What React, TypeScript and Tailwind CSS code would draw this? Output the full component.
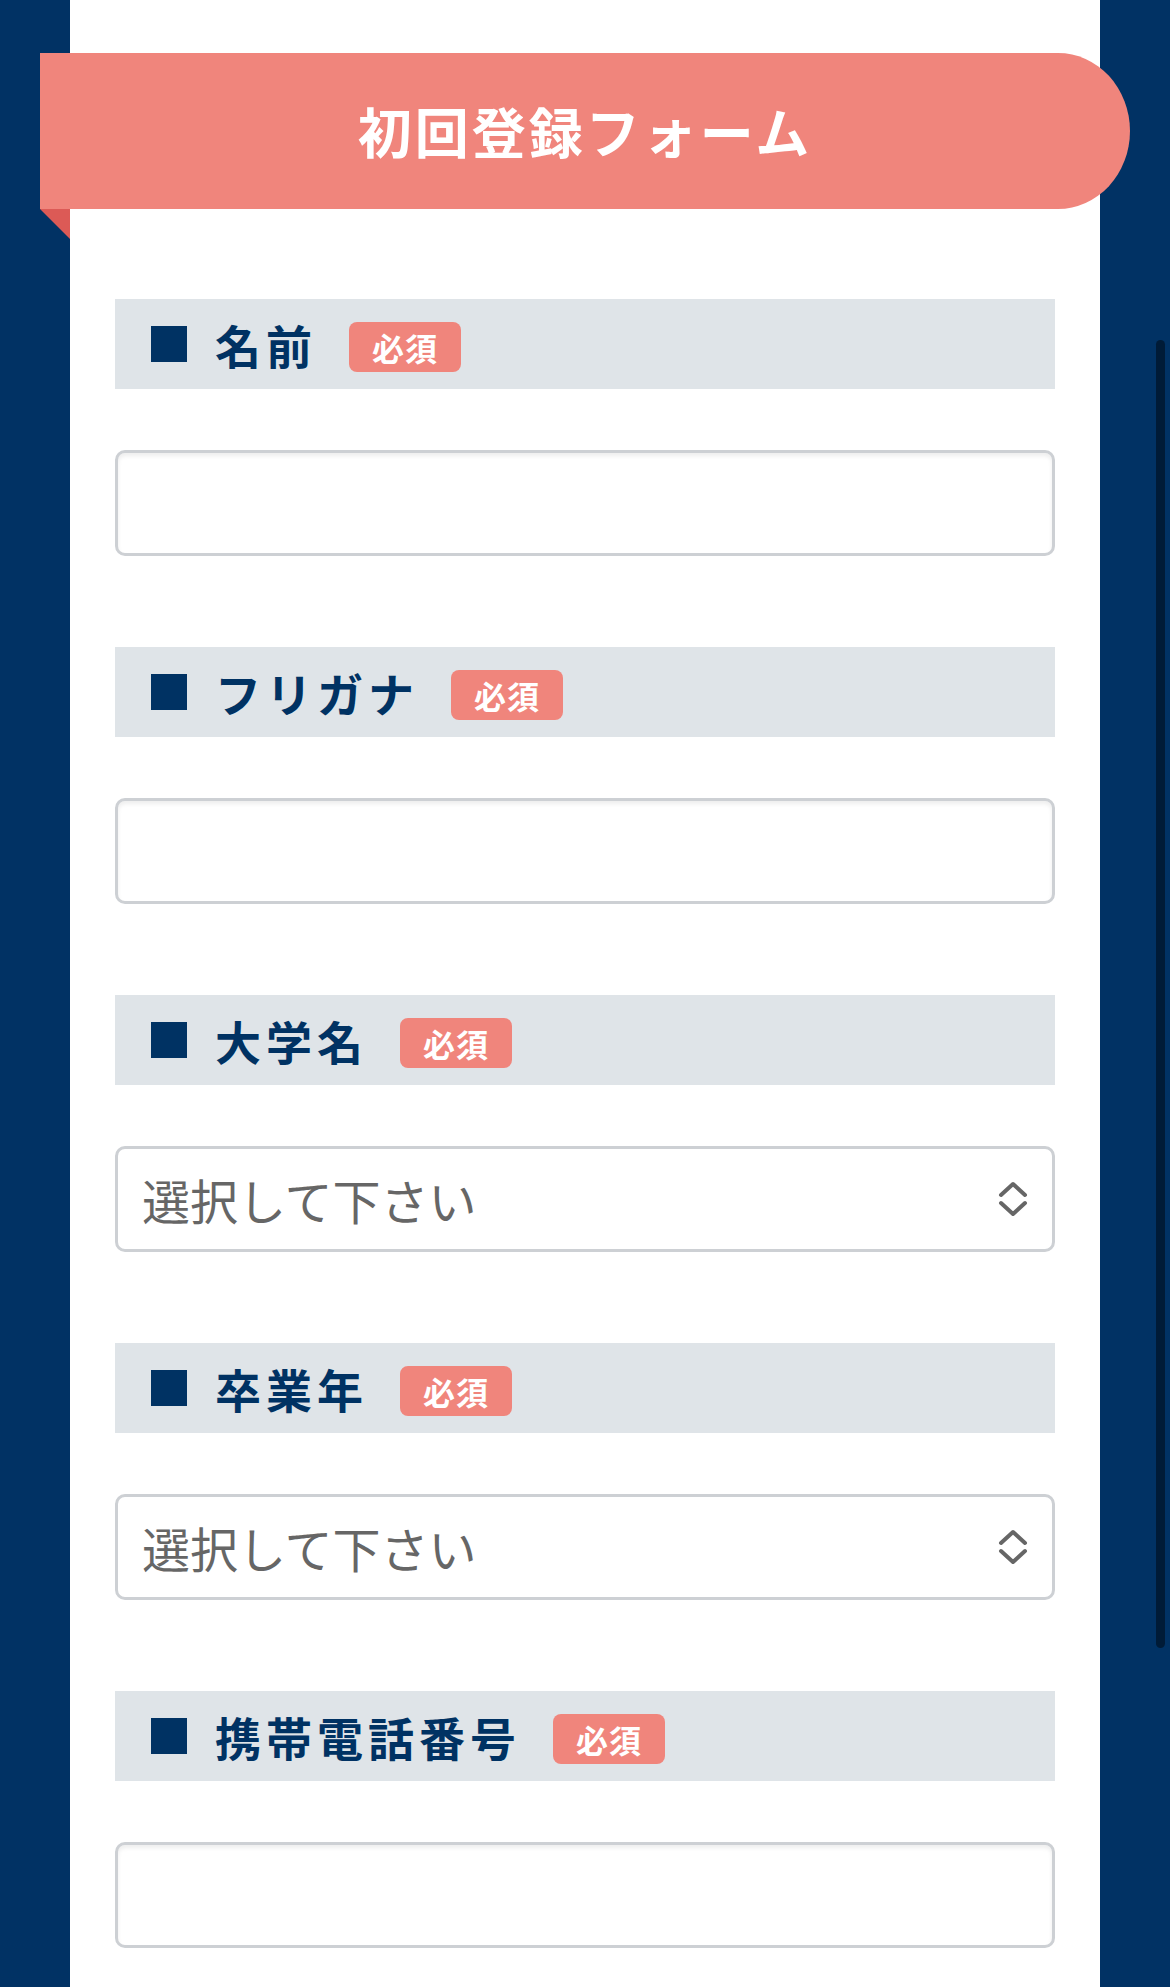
import React from 'react';

type Field = { label: string; kind: 'input' | 'select' };

const fields: Field[] = [
  { label: '名前', kind: 'input' },
  { label: 'フリガナ', kind: 'input' },
  { label: '大学名', kind: 'select' },
  { label: '卒業年', kind: 'select' },
  { label: '携帯電話番号', kind: 'input' },
];

const SelectArrows = () => (
  <svg width="30" height="36" viewBox="0 0 30 36" fill="none" stroke="#666666" strokeWidth="4" strokeLinecap="round" strokeLinejoin="round">
    <path d="M3 14 L15 3 L27 14" />
    <path d="M3 22 L15 33 L27 22" />
  </svg>
);

const FormField: React.FC<{ field: Field }> = ({ field }) => (
  <div className="flex flex-col">
    <div className="flex items-center h-[90px] bg-[#dfe4e8] pl-[36px]">
      <div className="w-[36px] h-[36px] bg-[#003263]" />
      <span className="ml-[28px] text-[46px] font-bold tracking-[5px] text-[#003263] leading-none">{field.label}</span>
      <span className="ml-[32px] mt-[5px] h-[50px] px-[23px] flex items-center rounded-[8px] bg-[#f0857c] text-white text-[32px] font-bold leading-none tracking-[1px]">
        必須
      </span>
    </div>
    {field.kind === 'input' ? (
      <input
        type="text"
        className="mt-[61px] h-[106px] w-full rounded-[10px] border-[3px] border-[#cdd0d4] bg-white px-[23px] text-[46px] shadow-[inset_0_3px_4px_rgba(0,0,0,0.07)] outline-none"
      />
    ) : (
      <div className="mt-[61px] h-[106px] w-full rounded-[10px] border-[3px] border-[#cdd0d4] bg-white pl-[24px] pr-[24px] flex items-center justify-between">
        <span className="text-[48px] text-[#666666] leading-none">選択して下さい</span>
        <SelectArrows />
      </div>
    )}
  </div>
);

export default function App() {
  return (
    <div
      className="relative min-h-[1987px] w-full bg-[#013264] px-[70px] overflow-hidden"
      style={{ fontFamily: '"Noto Sans CJK JP", "Noto Sans", sans-serif' }}
    >
      <div className="bg-white min-h-[1987px] pt-[53px] pb-[40px]">
        <div className="relative -mx-[30px] h-[156px] bg-[#f0857c] rounded-tr-[72px_78px] rounded-br-[72px_78px] flex items-center justify-center">
          <h1 className="text-white text-[54px] font-bold tracking-[3px] leading-none">初回登録フォーム</h1>
          <div className="absolute left-0 top-full w-[30px] h-[30px] bg-[#dc5a56] [clip-path:polygon(0_0,100%_0,100%_100%)]" />
        </div>
        <div className="px-[45px] pt-[90px] flex flex-col gap-[91px]">
          {fields.map((f) => (
            <FormField key={f.label} field={f} />
          ))}
        </div>
      </div>
      <div className="absolute right-[5px] top-[340px] w-[9px] h-[1308px] rounded-full bg-[#001b37]" />
    </div>
  );
}
